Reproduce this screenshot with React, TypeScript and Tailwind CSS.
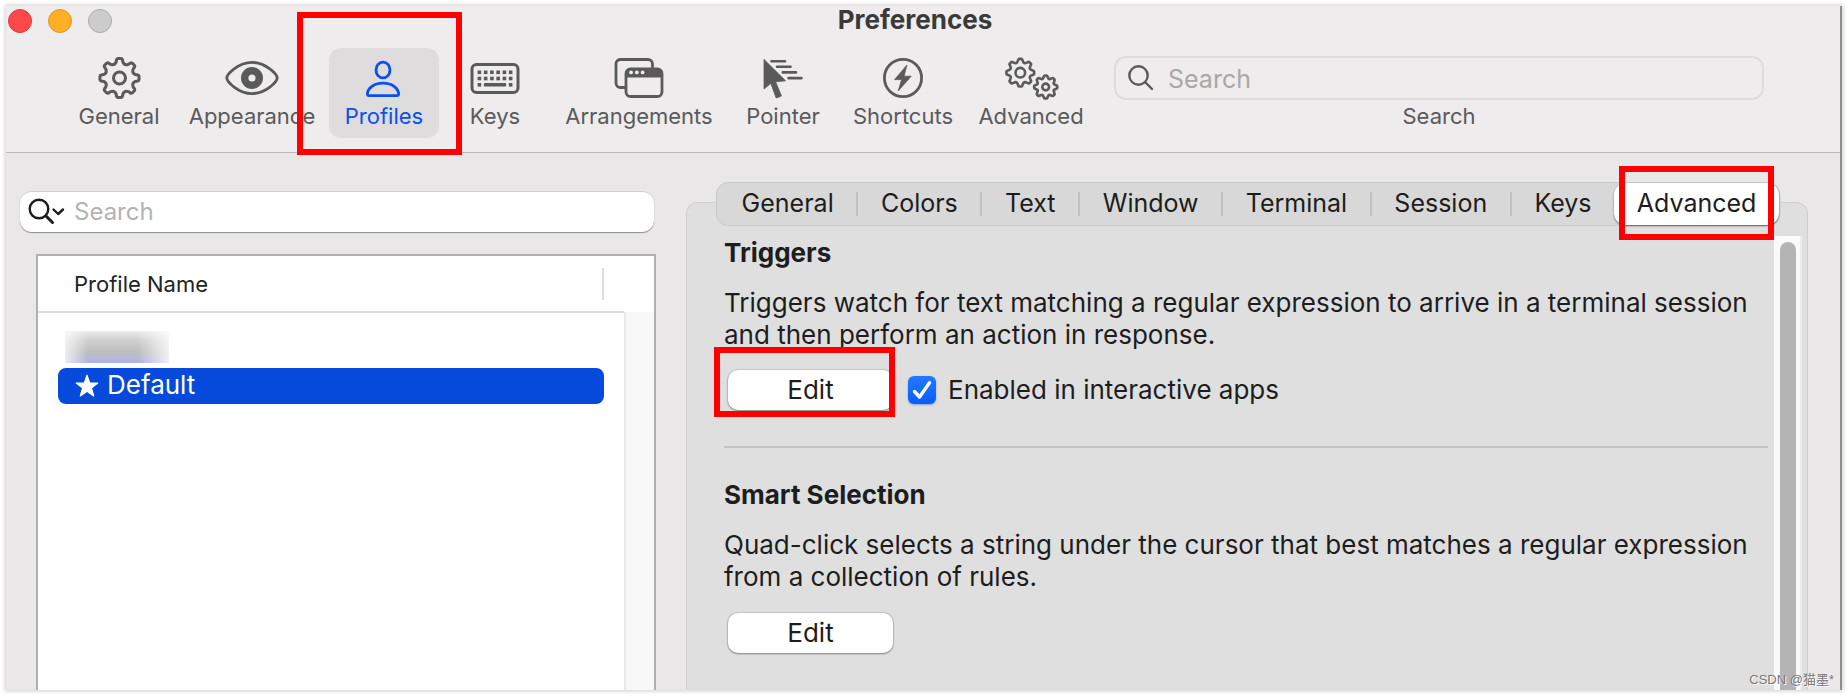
import { useState, type ReactNode } from "react";

function gearPath(cx: number, cy: number, outer: number, inner: number, teeth: number) {
  const step = 360 / teeth;
  const pt = (deg: number, r: number) => {
    const a = ((deg - 90) * Math.PI) / 180;
    return `${(cx + r * Math.cos(a)).toFixed(2)} ${(cy + r * Math.sin(a)).toFixed(2)}`;
  };
  let d = "";
  for (let i = 0; i < teeth; i++) {
    const c = i * step;
    d += `${i === 0 ? "M" : "L"}${pt(c - step * 0.27, inner + 1)}`;
    d += `L${pt(c - step * 0.2, outer - 1)}`;
    d += `Q${pt(c - step * 0.18, outer)} ${pt(c - step * 0.1, outer)}`;
    d += `L${pt(c + step * 0.1, outer)}`;
    d += `Q${pt(c + step * 0.18, outer)} ${pt(c + step * 0.2, outer - 1)}`;
    d += `L${pt(c + step * 0.27, inner + 1)}`;
    d += `Q${pt(c + step * 0.5, inner - 2)} ${pt(c + step * 0.73, inner + 1)}`;
  }
  return d + "Z";
}

const GearIcon = () => (
  <svg width="44" height="44" viewBox="0 0 44 44" fill="none" stroke="currentColor" strokeWidth="3" strokeLinejoin="round">
    <path d={gearPath(22.5, 22, 19.6, 15.2, 8)} />
    <circle cx="22.5" cy="22" r="6" />
  </svg>
);

const EyeIcon = () => (
  <svg width="56" height="44" viewBox="0 0 56 44" fill="none" stroke="currentColor">
    <path d="M2.8 22C2.8 18.6 14 6.4 28 6.4S53.2 18.6 53.2 22 42 37.6 28 37.6 2.8 25.4 2.8 22Z" strokeWidth="2.8" strokeLinejoin="round" />
    <circle cx="28" cy="22" r="7.3" strokeWidth="7.4" />
  </svg>
);

const PersonIcon = () => (
  <svg width="44" height="44" viewBox="0 0 44 44" fill="none" stroke="currentColor" strokeWidth="2.8" strokeLinejoin="round">
    <ellipse cx="21" cy="14" rx="7" ry="7.9" />
    <path d="M7 39.6H35C36 39.6 36.6 39 36.6 38C36.6 32.5 30.5 27.2 21 27.2S5.4 32.5 5.4 38C5.4 39 6 39.6 7 39.6Z" />
  </svg>
);

const KeyboardIcon = () => (
  <svg width="50" height="44" viewBox="0 0 50 44">
    <rect x="2" y="8.4" width="46" height="28" rx="4.5" fill="none" stroke="currentColor" strokeWidth="3" />
    {[0, 1, 2, 3, 4, 5].map((i) => (
      <g key={i} fill="currentColor">
        <rect x={7.6 + i * 6.25} y="14.5" width="3.6" height="3.6" />
        <rect x={7.6 + i * 6.25} y="20.7" width="3.6" height="3.6" />
      </g>
    ))}
    <g fill="currentColor">
      <rect x="7.6" y="27" width="3.6" height="3.6" />
      <rect x="13.85" y="27" width="22.35" height="3.6" rx="1" />
      <rect x="38.85" y="27" width="3.6" height="3.6" />
    </g>
  </svg>
);

const WindowsIcon = () => (
  <svg width="52" height="44" viewBox="0 0 52 44" fill="none" stroke="currentColor" strokeWidth="2.8">
    <path d="M12 31.5H7.5A4.5 4.5 0 0 1 3 27V7.5A4.5 4.5 0 0 1 7.5 3.5H35A4.5 4.5 0 0 1 39.5 8V12" />
    <rect x="13" y="13" width="36" height="27.5" rx="4.5" />
    <path d="M13 21.5V17A4 4 0 0 1 17 13H45A4 4 0 0 1 49 17V21.5Z" fill="currentColor" stroke="none" />
    <g fill="#eeecec" stroke="none">
      <circle cx="18" cy="16.4" r="1.9" />
      <circle cx="23.8" cy="16.4" r="1.9" />
      <circle cx="29.6" cy="16.4" r="1.9" />
    </g>
  </svg>
);

const PointerIcon = () => (
  <svg width="42" height="44" viewBox="0 0 42 44">
    <path d="M2 3.4V33L8.8 27.4L14.2 42L19.5 40L13.6 25.8L23.6 24.8Z" fill="currentColor" stroke="currentColor" strokeWidth="0.8" strokeLinejoin="round" />
    <path d="M9.5 5.2H23M15 10.7H28.5M20.8 16.4H34M26.5 22.1H39.5" fill="none" stroke="currentColor" strokeWidth="2.6" strokeLinecap="round" />
  </svg>
);

const BoltIcon = () => (
  <svg width="44" height="44" viewBox="0 0 44 44">
    <circle cx="22" cy="22" r="18.6" fill="none" stroke="currentColor" strokeWidth="2.8" />
    <path d="M26 9L13.6 23.6H20.6L17.2 35L30.2 20.2H23Z" fill="currentColor" stroke="currentColor" strokeWidth="0.8" strokeLinejoin="round" />
  </svg>
);

const GearsIcon = () => (
  <svg width="56" height="44" viewBox="0 0 56 44" fill="none" stroke="currentColor" strokeWidth="2.6" strokeLinejoin="round">
    <path d={gearPath(17.3, 16.7, 13.9, 11, 8)} />
    <circle cx="17.3" cy="16.7" r="4.8" />
    <path d={gearPath(42.7, 31, 11.6, 9.2, 8)} />
    <circle cx="42.7" cy="31" r="3.4" />
  </svg>
);

const Callout = ({ className }: { className: string }) => (
  <span aria-hidden="true" className={`pointer-events-none absolute z-10 border-6 border-[#fe0000] ${className}`} />
);

const tools: { name: string; icon: ReactNode; width: string }[] = [
  { name: "General", icon: <GearIcon />, width: "w-[112px]" },
  { name: "Appearance", icon: <EyeIcon />, width: "w-[154px]" },
  { name: "Profiles", icon: <PersonIcon />, width: "w-[110px]" },
  { name: "Keys", icon: <KeyboardIcon />, width: "w-[112px]" },
  { name: "Arrangements", icon: <WindowsIcon />, width: "w-[176px]" },
  { name: "Pointer", icon: <PointerIcon />, width: "w-[112px]" },
  { name: "Shortcuts", icon: <BoltIcon />, width: "w-[128px]" },
  { name: "Advanced", icon: <GearsIcon />, width: "w-[128px]" },
];

const tabs = ["General", "Colors", "Text", "Window", "Terminal", "Session", "Keys", "Advanced"];

function Toolbar() {
  return (
    <header className="relative shrink-0 border-b border-[#b9b7b8] bg-[#eeecec] pb-3.5 text-[#5a5a5a]">
      <div className="grid h-7 grid-cols-[112px_1fr_128px] items-center">
        <div className="flex gap-4 pl-0.5">
          <button aria-label="Close" className="size-6 rounded-full border border-[#e0383c] bg-[#fe484a]" />
          <button aria-label="Minimize" className="size-6 rounded-full border border-[#de981f] bg-[#fdb025]" />
          <button aria-label="Zoom" className="size-6 rounded-full border border-[#aaa] bg-[#cdcccd]" />
        </div>
        <h1 className="pb-0.5 text-center text-[26px] leading-7 font-bold text-[#3a3a3a]">Preferences</h1>
      </div>
      <div className="mt-3.5 flex pr-[76px] pl-[57px]">
        <nav aria-label="Preferences" className="flex shrink-0">
          {tools.map((t) => {
            const active = t.name === "Profiles";
            return (
              <div key={t.name} className={`relative shrink-0 ${t.width}`}>
                <button
                  aria-pressed={active}
                  className={`flex h-[90px] w-full flex-col items-center rounded-xl pt-2 ${active ? "bg-[#dedcdd] text-[#0a4ff0]" : ""}`}
                >
                  {t.icon}
                  <span className="text-[22px] leading-8">{t.name}</span>
                </button>
                {active && <Callout className="-top-9 -right-[23px] -bottom-[17px] -left-8" />}
              </div>
            );
          })}
        </nav>
        <div className="ml-[19px] flex min-w-0 flex-1 flex-col items-center pt-2">
          <div className="flex h-11 w-full items-center rounded-xl border-2 border-[#dddbdb] pl-3">
            <svg width="28" height="28" viewBox="0 0 28 28" fill="none" stroke="currentColor" strokeWidth="2.4" strokeLinecap="round">
              <circle cx="10.5" cy="11.5" r="9.2" />
              <path d="M17.2 18.2L24 25" />
            </svg>
            <input
              id="toolbar-search"
              type="text"
              placeholder="Search"
              className="ml-3 h-full min-w-0 flex-1 bg-transparent pt-0.5 text-[25px] outline-none placeholder:text-[#a9a8a8]"
            />
          </div>
          <label htmlFor="toolbar-search" className="text-[22px] leading-8">
            Search
          </label>
        </div>
      </div>
    </header>
  );
}

function ProfileList() {
  return (
    <section aria-label="Profiles" className="flex w-[650px] shrink-0 flex-col pt-[38px] pl-3.5">
      <div className="mr-0.5 flex h-[41px] shrink-0 items-center rounded-xl border-t border-[#d2d0d1] bg-white pl-2 shadow-[0_1px_1px_rgba(0,0,0,0.4)]">
        <svg width="40" height="28" viewBox="0 0 40 28" fill="none" stroke="#1c1c1c" strokeWidth="2.4" strokeLinecap="round" strokeLinejoin="round">
          <circle cx="11" cy="11" r="9.3" />
          <path d="M18 18L24.5 24.5" strokeWidth="3" />
          <path d="M25.5 11.5L30.2 16L35 11.5" />
        </svg>
        <input
          aria-label="Search profiles"
          type="text"
          placeholder="Search"
          className="ml-1.5 min-w-0 flex-1 bg-transparent text-[24px] leading-8 outline-none placeholder:text-[#b3b3b3]"
        />
      </div>
      <div className="mt-[22px] ml-4 flex min-h-0 flex-1 border-2 border-b-0 border-[#b1b0b1] bg-white">
        <div className="min-w-0 flex-1">
          <table className="w-full border-collapse">
            <thead>
              <tr>
                <th scope="col" className="h-14 border-b-2 border-[#dddddd] py-0 pr-5 pl-9 font-normal">
                  <div className="flex h-8 items-center border-r-2 border-[#dddddd] text-[22px] leading-8 text-[#232323]">Profile Name</div>
                </th>
              </tr>
            </thead>
            <tbody>
              <tr>
                <td className="px-5 pt-[18px] pb-[5px]">
                  <div
                    aria-label="Hidden profile"
                    className="ml-[7px] h-8 w-[104px] bg-[linear-gradient(90deg,rgba(255,255,255,0.75)_0%,rgba(255,255,255,0)_22%,rgba(255,255,255,0)_70%,rgba(255,255,255,0.8)_100%),linear-gradient(180deg,#ececec_0%,#cfcfcf_30%,#bdbdc0_68%,#b2b8dc_90%,#a9b2ea_100%)]"
                  />
                </td>
              </tr>
              <tr aria-selected="true">
                <td className="px-5 py-0">
                  <div className="flex h-9 items-center gap-2 rounded-lg bg-[#064adb] pl-[17px] text-[26px] leading-[34px] text-white">
                    <svg width="24" height="24" viewBox="0 0 24 24" fill="#fff" stroke="#fff" strokeWidth="1.2" strokeLinejoin="round">
                      <path d="M12 1.3L14.7 9H22.8L16.4 13.9L18.7 21.9L12 17.2L5.3 21.9L7.6 13.9L1.2 9H9.3Z" />
                    </svg>
                    <span className="pb-0.5">Default</span>
                  </div>
                </td>
              </tr>
            </tbody>
          </table>
        </div>
        <div className="mt-14 w-[30px] border-l-2 border-[#e8e8e8] bg-[#f8f8f8]" />
      </div>
    </section>
  );
}

function EditButton({ label }: { label: string }) {
  return (
    <button
      aria-label={label}
      className="h-10 w-[165px] rounded-[10px] bg-white text-[26px] leading-10 shadow-[0_0_1px_1px_rgba(0,0,0,0.1),0_1px_2px_rgba(0,0,0,0.35)]"
    >
      Edit
    </button>
  );
}

function SettingsPanel() {
  const [enabled, setEnabled] = useState(true);
  const [tab, setTab] = useState("Advanced");
  return (
    <section className="mt-[29px] mr-8 ml-[30px] flex min-w-0 flex-1 flex-col">
      <div role="tablist" className="z-[1] mr-7 ml-[30px] flex h-11 shrink-0 rounded-xl border border-[#cbcacb] bg-[#d8d8d8] pl-0.5 text-[25px]">
        {tabs.map((t, i) => {
          const selected = t === tab;
          return (
            <div key={t} className={`relative flex grow items-center ${selected ? "rounded-xl bg-white shadow-[0_1px_2px_rgba(0,0,0,0.55)]" : ""}`}>
              <button role="tab" aria-selected={selected} onClick={() => setTab(t)} className="h-full grow px-5 pb-0.5 leading-9">
                {t}
              </button>
              {!selected && tabs[i + 1] !== tab && <span className="h-6 w-0.5 bg-[#c1c0c1]" />}
              {t === "Advanced" && <Callout className="-top-[17px] right-[5px] -bottom-[15px] left-[5px]" />}
            </div>
          );
        })}
      </div>
      <div className="-mt-6 flex min-h-0 flex-1 rounded-t-xl border border-b-0 border-[#cfcecf] bg-[#dfdfdf] pt-[33px] pr-[5px] pl-[37px]">
        <div className="min-w-0 flex-1 pt-px pr-1.5 text-[26px] leading-8">
          <section className="border-b-2 border-[#c3c3c3] pb-9">
            <h2 className="font-bold">Triggers</h2>
            <p className="mt-[18px]">
              Triggers watch for text matching a regular expression to arrive in a terminal session
              <br />
              and then perform an action in response.
            </p>
            <div className="mt-[19px] ml-1 flex items-center">
              <div className="relative flex">
                <EditButton label="Edit triggers" />
                <Callout className="-top-[23px] -right-0.5 -bottom-[7px] -left-3.5" />
              </div>
              <label className="ml-[15px] flex items-center gap-3">
                <span className="relative flex size-7">
                  <input
                    type="checkbox"
                    checked={enabled}
                    onChange={(e) => setEnabled(e.target.checked)}
                    className="size-7 appearance-none rounded-md bg-white shadow-[0_1px_2px_rgba(0,60,200,0.4)] checked:bg-linear-to-b checked:from-[#2479fd] checked:to-[#0a5cfc]"
                  />
                  {enabled && (
                    <svg className="pointer-events-none absolute inset-0" width="28" height="28" viewBox="0 0 28 28" fill="none" stroke="#fff" strokeWidth="3.4" strokeLinecap="round" strokeLinejoin="round">
                      <path d="M6.5 15.5L11.5 21L21.5 6.8" />
                    </svg>
                  )}
                </span>
                Enabled in interactive apps
              </label>
            </div>
          </section>
          <section className="pt-[31px]">
            <h2 className="font-bold">Smart Selection</h2>
            <p className="mt-[18px]">
              Quad-click selects a string under the cursor that best matches a regular expression
              <br />
              from a collection of rules.
            </p>
            <div className="mt-5 ml-1 flex">
              <EditButton label="Edit smart selection" />
            </div>
          </section>
        </div>
        <div className="w-7 border-r-2 border-[#ebebeb] bg-[#fafafa] px-1.5 pt-1.5">
          <div className="h-full w-4 rounded-t-full bg-[#b4b4b4]" />
        </div>
      </div>
    </section>
  );
}

export default function App() {
  return (
    <div className="h-screen bg-white p-1.5 [font-family:Inter,'Liberation_Sans',sans-serif] text-[#1d1d1d]">
      <main className="relative flex h-full flex-col border-r-2 border-[#8f8e90] bg-[#e9e7e8] shadow-[0_0_4px_1px_rgba(0,0,0,0.2)]">
        <Toolbar />
        <div className="flex min-h-0 flex-1 overflow-hidden">
          <ProfileList />
          <SettingsPanel />
        </div>
        <span className="absolute right-1.5 bottom-0.5 z-10 text-[13px] leading-4 text-[#77777a] [font-family:'Liberation_Sans','Noto_Sans_CJK_SC',sans-serif] [text-shadow:1px_1px_0_#fff]">
          CSDN @猫墨*
        </span>
      </main>
    </div>
  );
}
